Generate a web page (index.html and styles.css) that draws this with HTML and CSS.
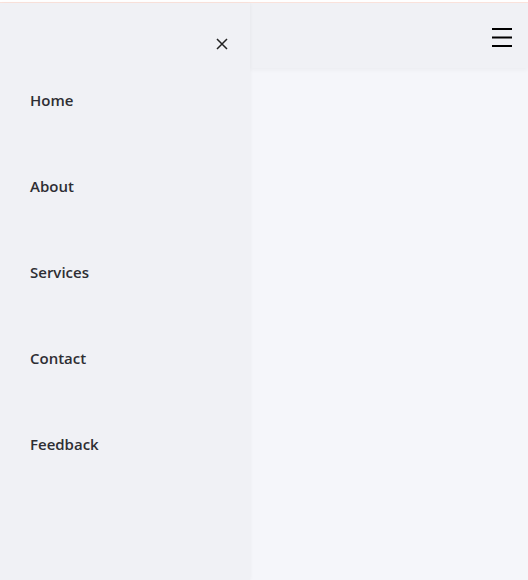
FILE: index.html
```html
<!DOCTYPE html>
<html>
<head>
<meta charset="utf-8">
<link rel="stylesheet" href="styles.css">
</head>
<body>
<div class="topline"></div>
<div class="app">
  <aside class="sidebar">
    <div class="side-head">
      <button class="close" aria-label="Close">
        <svg width="12" height="12" viewBox="0 0 12 12"><path d="M1 1L11 11M11 1L1 11" stroke="#222" stroke-width="1.5" fill="none"/></svg>
      </button>
    </div>
    <nav class="menu">
      <a class="item">Home</a>
      <a class="item">About</a>
      <a class="item">Services</a>
      <a class="item">Contact</a>
      <a class="item">Feedback</a>
    </nav>
  </aside>
  <main class="main">
    <header class="header">
      <button class="burger" aria-label="Menu">
        <svg width="20" height="20" viewBox="0 0 20 20"><path d="M0 1H20M0 9.5H20M0 18H20" stroke="#000" stroke-width="2" fill="none"/></svg>
      </button>
    </header>
  </main>
</div>
</body>
</html>
```
FILE: styles.css
```css
* { box-sizing: border-box; }
html, body { margin: 0; height: 100%; }
body {
  background: #f5f6fa;
  font-family: "Open Sans", "Noto Sans", sans-serif;
  overflow: hidden;
}
.topline {
  height: 3px;
  background: #fff;
  border-bottom: 1px solid #fbe3dc;
}
.app {
  display: flex;
  height: 577px;
}
.sidebar {
  width: 250px;
  flex: none;
  background: #f0f1f5;
  box-shadow: 1px 0 3px rgba(0,0,0,0.03);
  position: relative;
  z-index: 2;
}
.side-head {
  height: 80px;
  display: flex;
  justify-content: flex-end;
  padding: 35px 22px 0 0;
}
.close {
  border: 0;
  background: none;
  padding: 0;
  width: 12px;
  height: 12px;
  display: flex;
}
.menu {
  display: flex;
  flex-direction: column;
  gap: 64px;
  padding-left: 30px;
  margin-top: 6px;
}
.item {
  font-size: 15px;
  font-weight: 600;
  color: #2e2e33;
  line-height: 22px;
}
.main { flex: 1; }
.header {
  height: 65px;
  background: #f0f1f5;
  box-shadow: 0 2px 4px rgba(0,0,0,0.04);
  display: flex;
  justify-content: flex-end;
  align-items: flex-start;
  padding: 25px 16px 0 0;
}
.burger {
  border: 0;
  background: none;
  padding: 0;
  width: 20px;
  height: 20px;
  display: flex;
}
```
